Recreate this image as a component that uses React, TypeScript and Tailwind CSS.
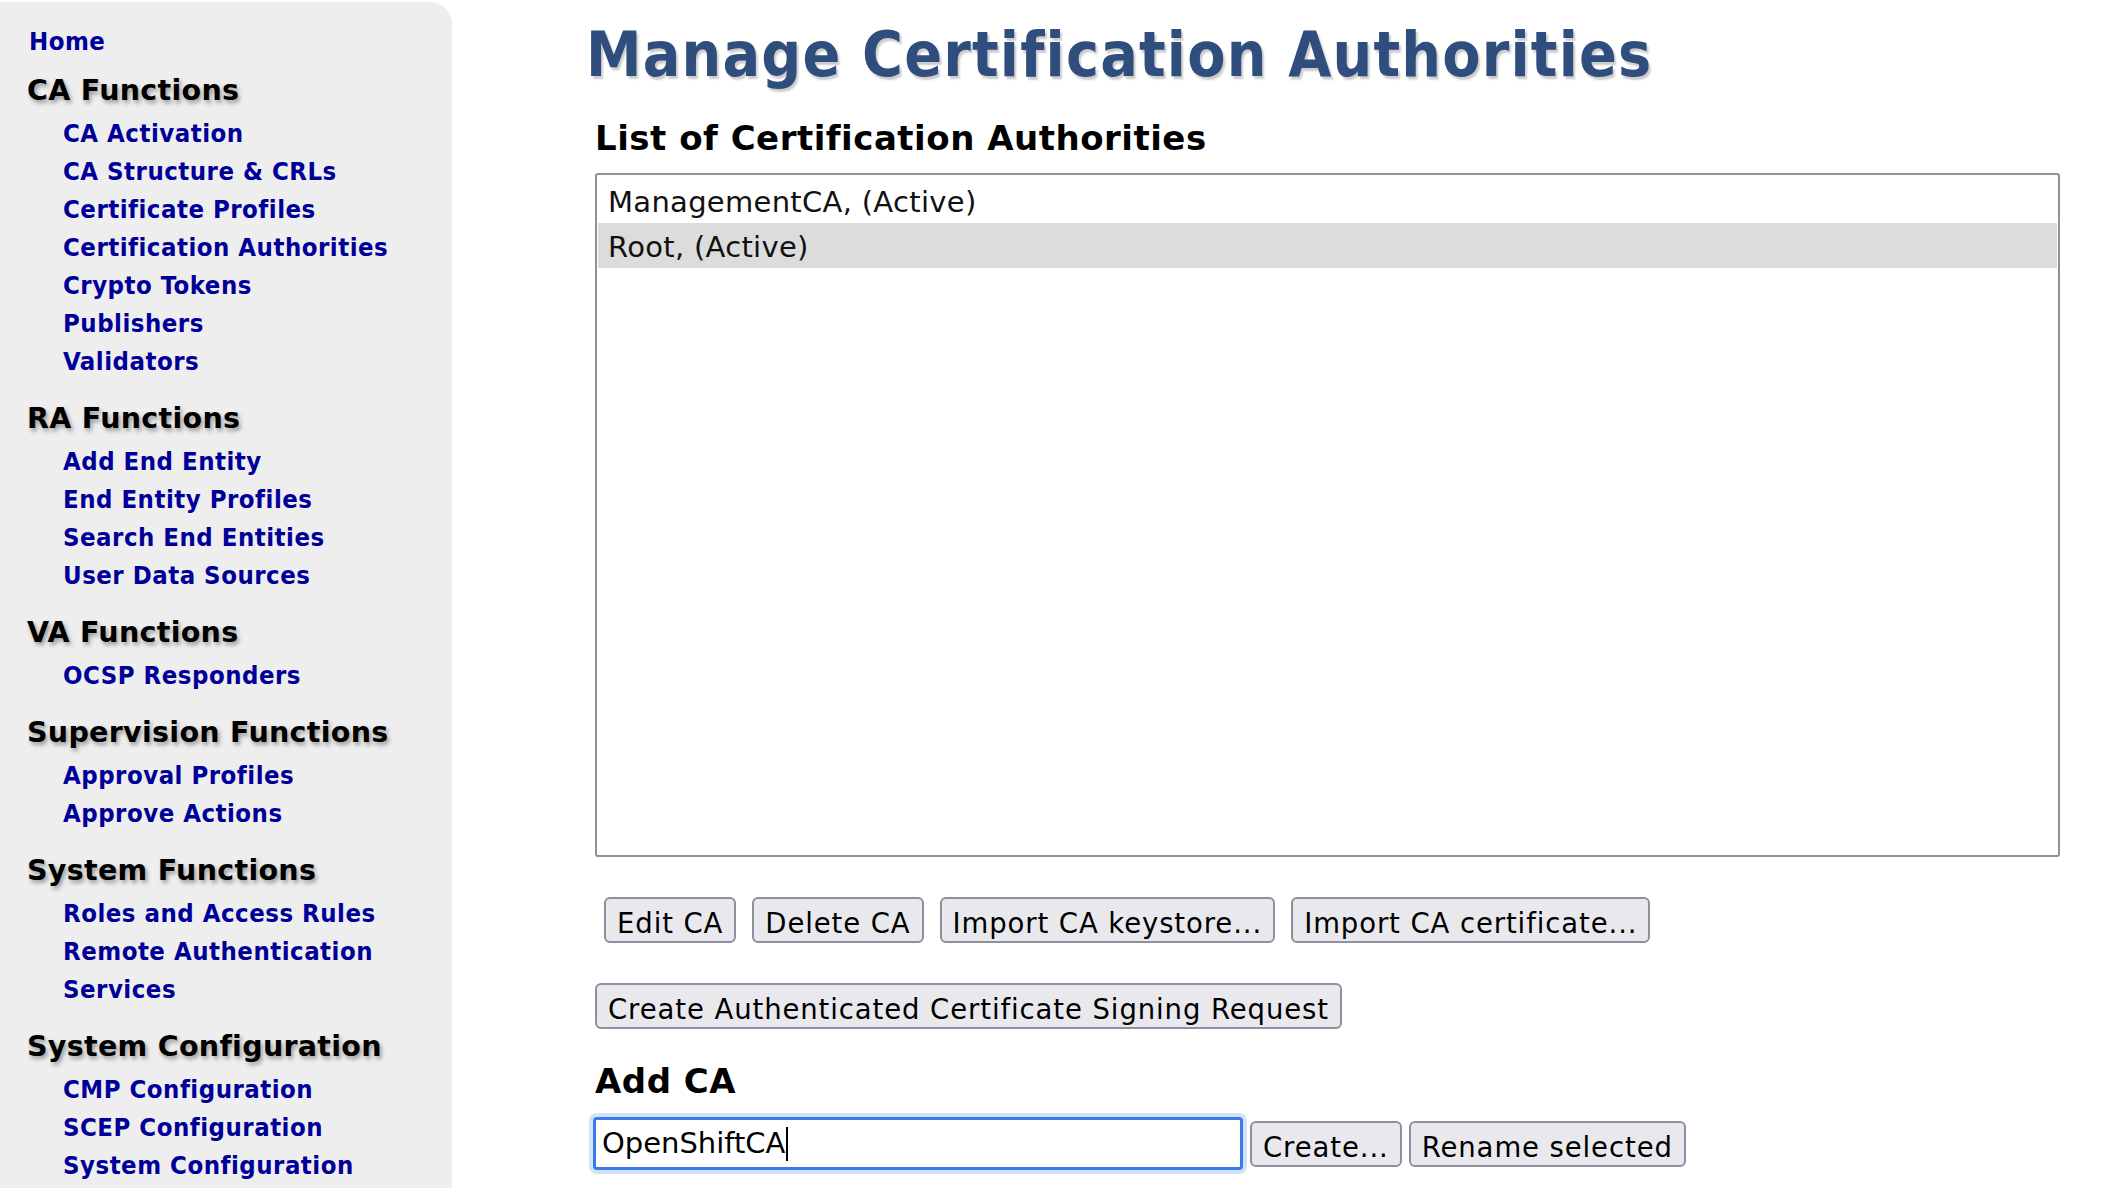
import React from "react";

type Section = { title: string; links: string[][] };

const sections: Section[] = [
    {
        title: "CA Functions",
        links: [
            ["CA Activation"],
            ["CA Structure & CRLs"],
            ["Certificate Profiles"],
            ["Certification Authorities"],
            ["Crypto Tokens"],
            ["Publishers"],
            ["Validators"],
        ],
    },
    {
        title: "RA Functions",
        links: [["Add End Entity"], ["End Entity Profiles"], ["Search End Entities"], ["User Data Sources"]],
    },
    { title: "VA Functions", links: [["OCSP Responders"]] },
    { title: "Supervision Functions", links: [["Approval Profiles"], ["Approve Actions"]] },
    {
        title: "System Functions",
        links: [["Roles and Access Rules"], ["Remote Authentication", "Services"]],
    },
    {
        title: "System Configuration",
        links: [["CMP Configuration"], ["SCEP Configuration"], ["System Configuration"]],
    },
];

const cas = [
    { id: 1, name: "ManagementCA, (Active)", selected: false },
    { id: 2, name: "Root, (Active)", selected: true },
];

// narrow bold face, close to the Tahoma look of the original
const condensed = "font-['DejaVu_Sans_Condensed','DejaVu_Sans',sans-serif] font-stretch-condensed";

function Button({ label }: { label: string }) {
    return (
        <button className="h-[46px] shrink-0 rounded-[6px] border-2 border-[#8f8f9d] bg-[#e9e9ed] px-[11px] pt-[6px] text-[27.5px] leading-[36px] tracking-[0.9px] text-black whitespace-nowrap">
            {label}
        </button>
    );
}

function Sidebar() {
    return (
        <nav className="mt-[2px] w-[452px] shrink-0 self-start min-h-[1186px] rounded-tr-[22px] bg-[#eeeeee] pt-[20px] font-bold">
            <a href="#" className={`${condensed} block pl-[29px] text-[25.5px] leading-[38px] tracking-[0.5px] text-[#000099]`}>
                Home
            </a>
            {sections.map((section, i) => (
                <div key={section.title}>
                    <h2
                        className={`${i === 0 ? "mt-[11px]" : "mt-[19px]"} mb-[3px] pl-[27px] text-[28.5px] leading-[40px] tracking-[0.3px] text-black [text-shadow:2px_3px_4px_#999999] whitespace-nowrap`}
                    >
                        {section.title}
                    </h2>
                    {section.links.map((link) => (
                        <a
                            key={link[0]}
                            href="#"
                            className={`${condensed} block pl-[63px] text-[25.5px] leading-[38px] tracking-[0.5px] text-[#000099] whitespace-nowrap`}
                        >
                            {link.map((part, j) => (
                                <React.Fragment key={part}>
                                    {j > 0 && <br />}
                                    {part}
                                </React.Fragment>
                            ))}
                        </a>
                    ))}
                </div>
            ))}
        </nav>
    );
}

export default function App() {
    return (
        <div className="flex h-[1188px] w-[2124px] overflow-hidden bg-white font-['DejaVu_Sans',sans-serif]">
            <Sidebar />
            <main className="flex-1 pl-[143px] pr-[64px] pt-[19px]">
                <h1
                    className={`${condensed} -ml-[9px] text-[62px] font-bold leading-[72px] tracking-[1.2px] text-[#2f4d7d] [text-shadow:2px_3px_2px_#cccccc] whitespace-nowrap`}
                >
                    Manage Certification Authorities
                </h1>
                <h2 className="mt-[27px] text-[34px] font-bold leading-[40px] tracking-[0.5px] text-black">
                    List of Certification Authorities
                </h2>
                <div className="mt-[15px] h-[684px] rounded-[3px] border-2 border-[#8f8f9d] bg-white px-[1px] pt-[3px]">
                    {cas.map((ca) => (
                        <div
                            key={ca.id}
                            className={`h-[45px] pl-[10px] pt-[3px] text-[29px] leading-[42px] tracking-[0.3px] text-[#111111] ${ca.selected ? "bg-[#dcdcdc]" : ""}`}
                        >
                            {ca.name}
                        </div>
                    ))}
                </div>
                <div className="mt-[40px] flex gap-[16px] pl-[9px]">
                    <Button label="Edit CA" />
                    <Button label="Delete CA" />
                    <Button label="Import CA keystore..." />
                    <Button label="Import CA certificate..." />
                </div>
                <div className="mt-[40px] flex">
                    <Button label="Create Authenticated Certificate Signing Request" />
                </div>
                <h2 className="mt-[32px] text-[34px] font-bold leading-[40px] tracking-[0.5px] text-black">Add CA</h2>
                <div className="mt-[16px] flex items-center gap-[7px]">
                    <div className="-ml-[2px] flex h-[53px] w-[650px] items-center rounded-[4px] border-[3px] border-[#3a7be8] bg-white pl-[6px] text-[29px] text-black shadow-[0_0_0_4px_#cfe2fa]">
                        <span>OpenShiftCA</span>
                        <span className="ml-[1px] h-[34px] w-[2px] bg-black" />
                    </div>
                    <Button label="Create..." />
                    <Button label="Rename selected" />
                </div>
            </main>
        </div>
    );
}
